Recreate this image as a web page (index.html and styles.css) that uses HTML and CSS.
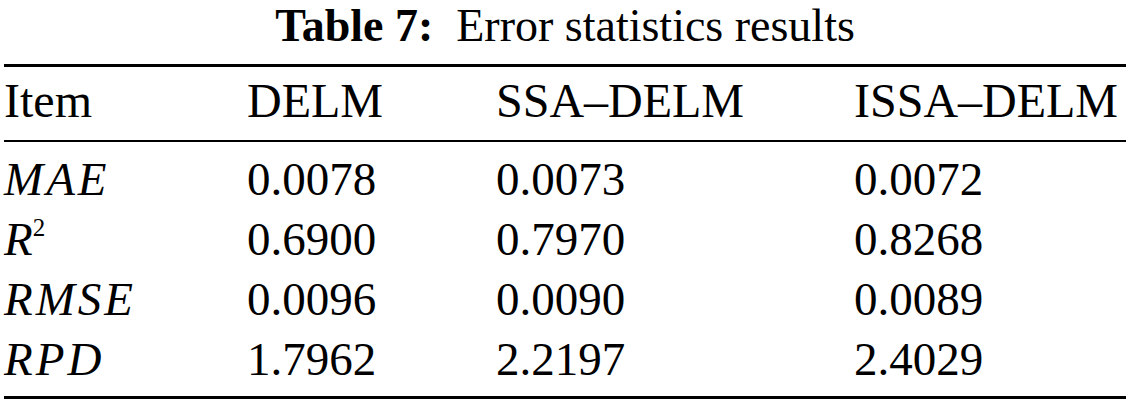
FILE: index.html
```html
<!DOCTYPE html>
<html lang="en">
<head>
  <meta charset="UTF-8">
  <title>Table 7: Error statistics results</title>
  <link rel="stylesheet" href="styles.css">
</head>
<body>

  <div class="caption"><b>Table 7:</b>&nbsp; Error statistics results</div>

  <table class="stats">
    <thead>
      <tr>
        <th class="c-item">Item</th>
        <th class="c-delm">DELM</th>
        <th class="c-ssa">SSA–DELM</th>
        <th>ISSA–DELM</th>
      </tr>
    </thead>
    <tbody>
      <tr><td><i>MAE</i></td><td>0.0078</td><td>0.0073</td><td>0.0072</td></tr>
      <tr><td><i class="tight">R</i><sup>2</sup></td><td>0.6900</td><td>0.7970</td><td>0.8268</td></tr>
      <tr><td><i>RMSE</i></td><td>0.0096</td><td>0.0090</td><td>0.0089</td></tr>
      <tr><td><i>RPD</i></td><td>1.7962</td><td>2.2197</td><td>2.4029</td></tr>
    </tbody>
  </table>

</body>
</html>
```

FILE: styles.css
```css
body {
  margin: 0;
  padding: 0 3px 0 4px;
  background: #fff;
  color: #000;
  font-family: "Liberation Serif", "Times New Roman", serif;
  font-size: 46px;
}

.caption {
  text-align: center;
  line-height: 52px;
  margin-bottom: 12px;
}

.stats {
  width: 100%;
  border-collapse: collapse;
  border-top: 3px solid #000;
  border-bottom: 3px solid #000;
}
.stats th, .stats td {
  padding: 0;
  text-align: left;
  font-weight: normal;
  white-space: nowrap;
}
.stats thead th {
  font-size: 48px;
  line-height: 50px;
  padding: 9px 0 14px;
  border-bottom: 2px solid #000;
}
.stats tbody td {
  font-size: 47px;
  line-height: 60px;
}
.stats tbody tr:first-child td { padding-top: 7px; }
.stats tbody tr:last-child td { padding-bottom: 7px; }

.c-item { width: 243px; }
.c-delm { width: 249px; }
.c-ssa  { width: 358px; }

.stats i { font-style: italic; letter-spacing: 3px; }
.stats i.tight { letter-spacing: 0; }
.stats sup { font-size: 25px; vertical-align: 19px; line-height: 0; }
```
